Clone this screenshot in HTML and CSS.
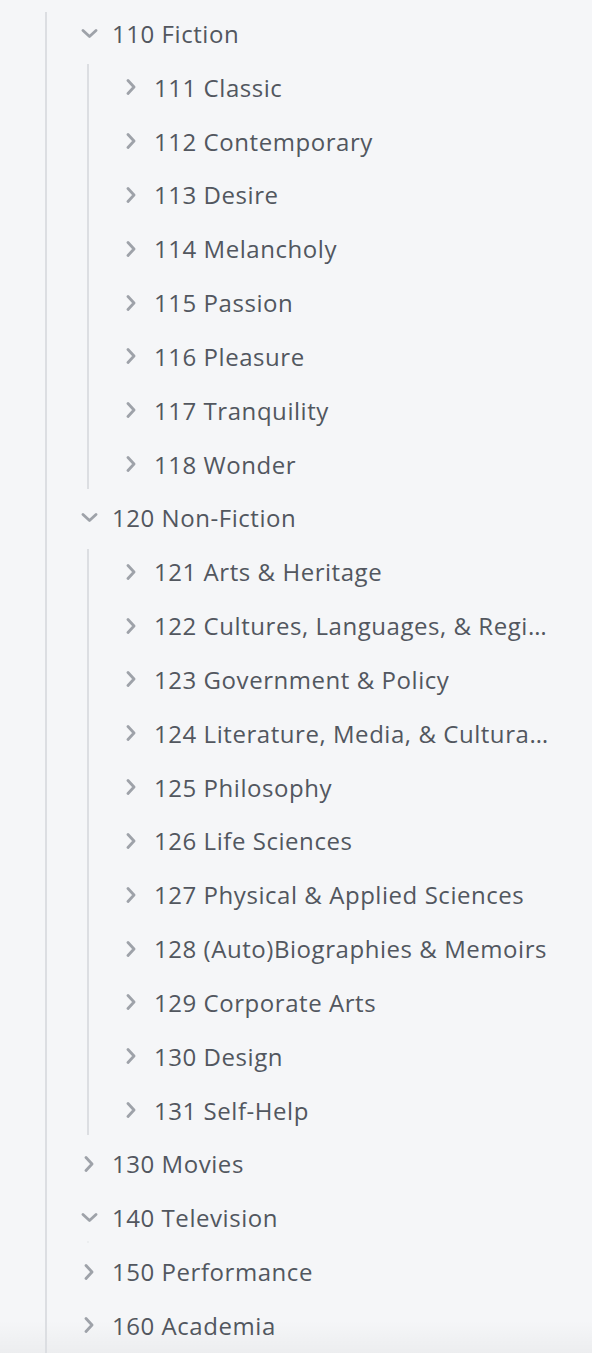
FILE: index.html
```html
<!DOCTYPE html>
<html lang="en">
<head>
<meta charset="utf-8">
<title>Tree</title>
<link rel="stylesheet" href="styles.css">
</head>
<body>
<div class="tree">
  <div class="group outer">
    <div class="row">
      <span class="toggle"><svg class="chev down" viewBox="0 0 16 9"><path d="M1.5 1.5 L8 7.5 L14.5 1.5"/></svg></span>
      <span class="label">110 Fiction</span>
    </div>
    <div class="group">
      <div class="row"><span class="toggle"><svg class="chev right" viewBox="0 0 9 16"><path d="M1.5 1.5 L7.5 8 L1.5 14.5"/></svg></span><span class="label">111 Classic</span></div>
      <div class="row"><span class="toggle"><svg class="chev right" viewBox="0 0 9 16"><path d="M1.5 1.5 L7.5 8 L1.5 14.5"/></svg></span><span class="label">112 Contemporary</span></div>
      <div class="row"><span class="toggle"><svg class="chev right" viewBox="0 0 9 16"><path d="M1.5 1.5 L7.5 8 L1.5 14.5"/></svg></span><span class="label">113 Desire</span></div>
      <div class="row"><span class="toggle"><svg class="chev right" viewBox="0 0 9 16"><path d="M1.5 1.5 L7.5 8 L1.5 14.5"/></svg></span><span class="label">114 Melancholy</span></div>
      <div class="row"><span class="toggle"><svg class="chev right" viewBox="0 0 9 16"><path d="M1.5 1.5 L7.5 8 L1.5 14.5"/></svg></span><span class="label">115 Passion</span></div>
      <div class="row"><span class="toggle"><svg class="chev right" viewBox="0 0 9 16"><path d="M1.5 1.5 L7.5 8 L1.5 14.5"/></svg></span><span class="label">116 Pleasure</span></div>
      <div class="row"><span class="toggle"><svg class="chev right" viewBox="0 0 9 16"><path d="M1.5 1.5 L7.5 8 L1.5 14.5"/></svg></span><span class="label">117 Tranquility</span></div>
      <div class="row"><span class="toggle"><svg class="chev right" viewBox="0 0 9 16"><path d="M1.5 1.5 L7.5 8 L1.5 14.5"/></svg></span><span class="label">118 Wonder</span></div>
    </div>
    <div class="row">
      <span class="toggle"><svg class="chev down" viewBox="0 0 16 9"><path d="M1.5 1.5 L8 7.5 L14.5 1.5"/></svg></span>
      <span class="label">120 Non-Fiction</span>
    </div>
    <div class="group">
      <div class="row"><span class="toggle"><svg class="chev right" viewBox="0 0 9 16"><path d="M1.5 1.5 L7.5 8 L1.5 14.5"/></svg></span><span class="label">121 Arts &amp; Heritage</span></div>
      <div class="row"><span class="toggle"><svg class="chev right" viewBox="0 0 9 16"><path d="M1.5 1.5 L7.5 8 L1.5 14.5"/></svg></span><span class="label">122 Cultures, Languages, &amp; Regions</span></div>
      <div class="row"><span class="toggle"><svg class="chev right" viewBox="0 0 9 16"><path d="M1.5 1.5 L7.5 8 L1.5 14.5"/></svg></span><span class="label">123 Government &amp; Policy</span></div>
      <div class="row"><span class="toggle"><svg class="chev right" viewBox="0 0 9 16"><path d="M1.5 1.5 L7.5 8 L1.5 14.5"/></svg></span><span class="label">124 Literature, Media, &amp; Cultural Studies</span></div>
      <div class="row"><span class="toggle"><svg class="chev right" viewBox="0 0 9 16"><path d="M1.5 1.5 L7.5 8 L1.5 14.5"/></svg></span><span class="label">125 Philosophy</span></div>
      <div class="row"><span class="toggle"><svg class="chev right" viewBox="0 0 9 16"><path d="M1.5 1.5 L7.5 8 L1.5 14.5"/></svg></span><span class="label">126 Life Sciences</span></div>
      <div class="row"><span class="toggle"><svg class="chev right" viewBox="0 0 9 16"><path d="M1.5 1.5 L7.5 8 L1.5 14.5"/></svg></span><span class="label">127 Physical &amp; Applied Sciences</span></div>
      <div class="row"><span class="toggle"><svg class="chev right" viewBox="0 0 9 16"><path d="M1.5 1.5 L7.5 8 L1.5 14.5"/></svg></span><span class="label">128 (Auto)Biographies &amp; Memoirs</span></div>
      <div class="row"><span class="toggle"><svg class="chev right" viewBox="0 0 9 16"><path d="M1.5 1.5 L7.5 8 L1.5 14.5"/></svg></span><span class="label">129 Corporate Arts</span></div>
      <div class="row"><span class="toggle"><svg class="chev right" viewBox="0 0 9 16"><path d="M1.5 1.5 L7.5 8 L1.5 14.5"/></svg></span><span class="label">130 Design</span></div>
      <div class="row"><span class="toggle"><svg class="chev right" viewBox="0 0 9 16"><path d="M1.5 1.5 L7.5 8 L1.5 14.5"/></svg></span><span class="label">131 Self-Help</span></div>
    </div>
    <div class="row">
      <span class="toggle"><svg class="chev right" viewBox="0 0 9 16"><path d="M1.5 1.5 L7.5 8 L1.5 14.5"/></svg></span>
      <span class="label">130 Movies</span>
    </div>
    <div class="row">
      <span class="toggle"><svg class="chev down" viewBox="0 0 16 9"><path d="M1.5 1.5 L8 7.5 L14.5 1.5"/></svg></span>
      <span class="label">140 Television</span>
    </div>
    <div class="group empty"></div>
    <div class="row">
      <span class="toggle"><svg class="chev right" viewBox="0 0 9 16"><path d="M1.5 1.5 L7.5 8 L1.5 14.5"/></svg></span>
      <span class="label">150 Performance</span>
    </div>
    <div class="row">
      <span class="toggle"><svg class="chev right" viewBox="0 0 9 16"><path d="M1.5 1.5 L7.5 8 L1.5 14.5"/></svg></span>
      <span class="label">160 Academia</span>
    </div>
  </div>
</div>
</body>
</html>
```

FILE: styles.css
```css
html {
  background: #f5f6f8;
}
body {
  margin: 0;
  min-height: 1353px;
  font-family: "Open Sans", Lato, sans-serif;
  color: #52575f;
  background: linear-gradient(to bottom, rgba(0,0,0,0) 1320px, rgba(0,0,0,0.035) 1353px);
}
.tree {
  padding: 6.6px 38px 0 45px;
}
.group {
  position: relative;
  padding-left: 2px;
}
.group::before {
  content: "";
  position: absolute;
  left: 0;
  top: 4px;
  bottom: 2px;
  width: 2px;
  background: #dcdee2;
}
.group.outer::before {
  top: 5.4px;
  bottom: -20px;
}
.group .group {
  margin-left: 40px;
}
.group.empty {
  height: 0;
}
.group.empty::before {
  top: -4px;
  bottom: auto;
  height: 2px;
  background: #eceef0;
}
.row {
  height: 53.83px;
  display: flex;
  align-items: center;
  gap: 12px;
  min-width: 0;
}
.toggle {
  flex: none;
  width: 22px;
  margin-left: 31px;
  display: flex;
  justify-content: center;
  align-items: center;
}
.chev {
  fill: none;
  stroke: #9ea2a9;
  stroke-width: 2.8;
  stroke-linecap: round;
  stroke-linejoin: round;
}
.chev.down {
  width: 17px;
  height: 9px;
}
.chev.right {
  width: 10px;
  height: 16px;
}
.label {
  font-size: 24px;
  letter-spacing: 0.55px;
  white-space: nowrap;
  overflow: hidden;
  text-overflow: ellipsis;
  min-width: 0;
}
```
